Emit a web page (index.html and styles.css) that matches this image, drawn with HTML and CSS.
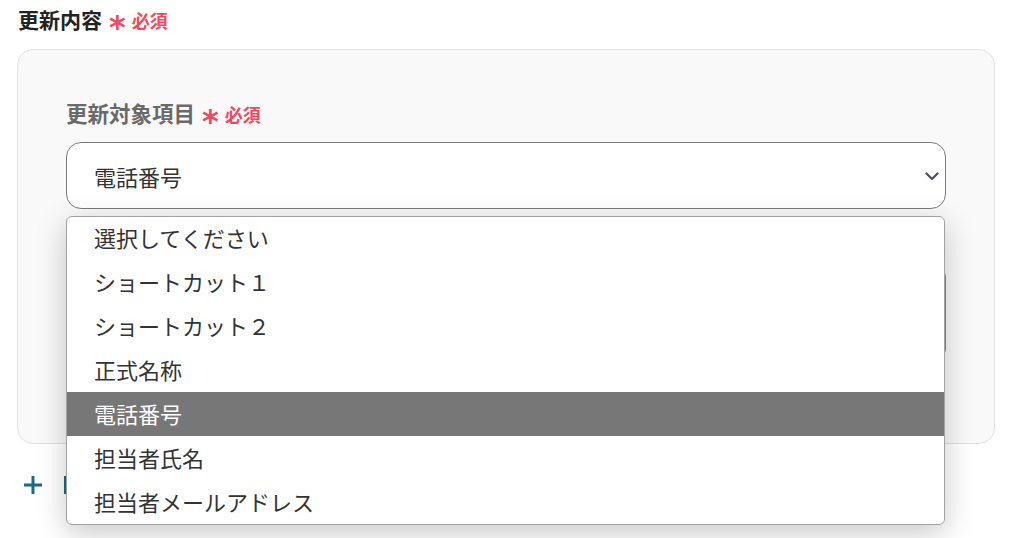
FILE: index.html
```html
<!DOCTYPE html>
<html lang="ja">
<head>
<meta charset="utf-8">
<link rel="stylesheet" href="styles.css">
</head>
<body>
<div class="page">
  <div class="section-title">更新内容<span class="ast">*</span><span class="req">必須</span></div>
  <div class="card">
    <div class="field-label">更新対象項目<span class="ast">*</span><span class="req">必須</span></div>
    <div class="select">
      <span class="select-value">電話番号</span>
      <svg class="chev" width="14" height="9" viewBox="0 0 14 9"><path d="M1.5 1.5 L7 7 L12.5 1.5" fill="none" stroke="#4a4f57" stroke-width="2.2" stroke-linecap="round" stroke-linejoin="round"/></svg>
    </div>
    <div class="textbox"></div>
  </div>
  <div class="add-row">
    <svg class="plus" width="20" height="20" viewBox="0 0 20 20"><path d="M10 1 V19 M1 10 H19" stroke="#1b6a80" stroke-width="3"/></svg>
    <span class="add-mark"></span>
  </div>
  <ul class="dropdown">
    <li>選択してください</li>
    <li>ショートカット１</li>
    <li>ショートカット２</li>
    <li>正式名称</li>
    <li class="active">電話番号</li>
    <li>担当者氏名</li>
    <li>担当者メールアドレス</li>
  </ul>
</div>
</body>
</html>
```

FILE: styles.css
```css
html, body {
  margin: 0;
  padding: 0;
  background: #ffffff;
}
body {
  font-family: "Noto Sans CJK JP", "Noto Sans", sans-serif;
  color: #333;
  width: 1032px;
  height: 538px;
  overflow: hidden;
}
.page {
  position: relative;
  padding: 5px 37px 0 17px;
}
.section-title {
  font-size: 21px;
  font-weight: 700;
  line-height: 28px;
  color: #222;
  padding-left: 1px;
  display: flex;
  align-items: baseline;
}
.ast {
  color: #ef4a60;
  font-size: 32px;
  font-weight: 700;
  margin-left: 7px;
  position: relative;
  top: 10px;
  line-height: 20px;
  font-family: "DejaVu Sans", sans-serif;
}
.req {
  color: #ef4a60;
  font-size: 18px;
  font-weight: 700;
  margin-left: 6px;
}
.card {
  margin-top: 15px;
  height: 395px;
  box-sizing: border-box;
  border: 1px solid #e3e3e3;
  border-radius: 16px;
  background: #f9f9f9;
  padding: 49px 48px 0 48px;
}
.field-label {
  font-size: 21.5px;
  font-weight: 700;
  line-height: 28px;
  color: #6a6a6a;
  display: flex;
  align-items: baseline;
}
.select {
  margin-top: 14px;
  height: 67px;
  box-sizing: border-box;
  border: 1px solid #7a7a7a;
  border-radius: 15px;
  background: #fff;
  display: flex;
  align-items: center;
  justify-content: space-between;
  padding: 0 6px 0 27px;
}
.select-value {
  font-size: 22px;
  color: #333;
}
.chev {
  margin-top: 2px;
}
.textbox {
  margin-top: 60px;
  height: 86px;
  border: 1px solid #8a8a8a;
  border-radius: 8px;
  background: #fff;
}
.add-row {
  display: flex;
  align-items: center;
  gap: 21px;
  padding-left: 6px;
  margin-top: 29px;
  height: 24px;
}
.add-mark {
  width: 6px;
  height: 18px;
  border-left: 2px solid #1b6a80;
}
.dropdown {
  position: absolute;
  left: 66px;
  top: 216px;
  width: 879px;
  margin: 0;
  padding: 0;
  list-style: none;
  background: #fff;
  border: 1px solid #a2a2a2;
  border-radius: 6px;
  box-sizing: border-box;
  overflow: hidden;
  box-shadow: 0 8px 30px rgba(0, 0, 0, 0.22);
}
.dropdown li {
  height: 44px;
  line-height: 43px;
  padding-left: 27px;
  font-size: 22px;
  color: #333;
}
.dropdown li:first-child {
  height: 43px;
  line-height: 41px;
}
.dropdown li.active {
  background: #777777;
  color: #fff;
}
```
